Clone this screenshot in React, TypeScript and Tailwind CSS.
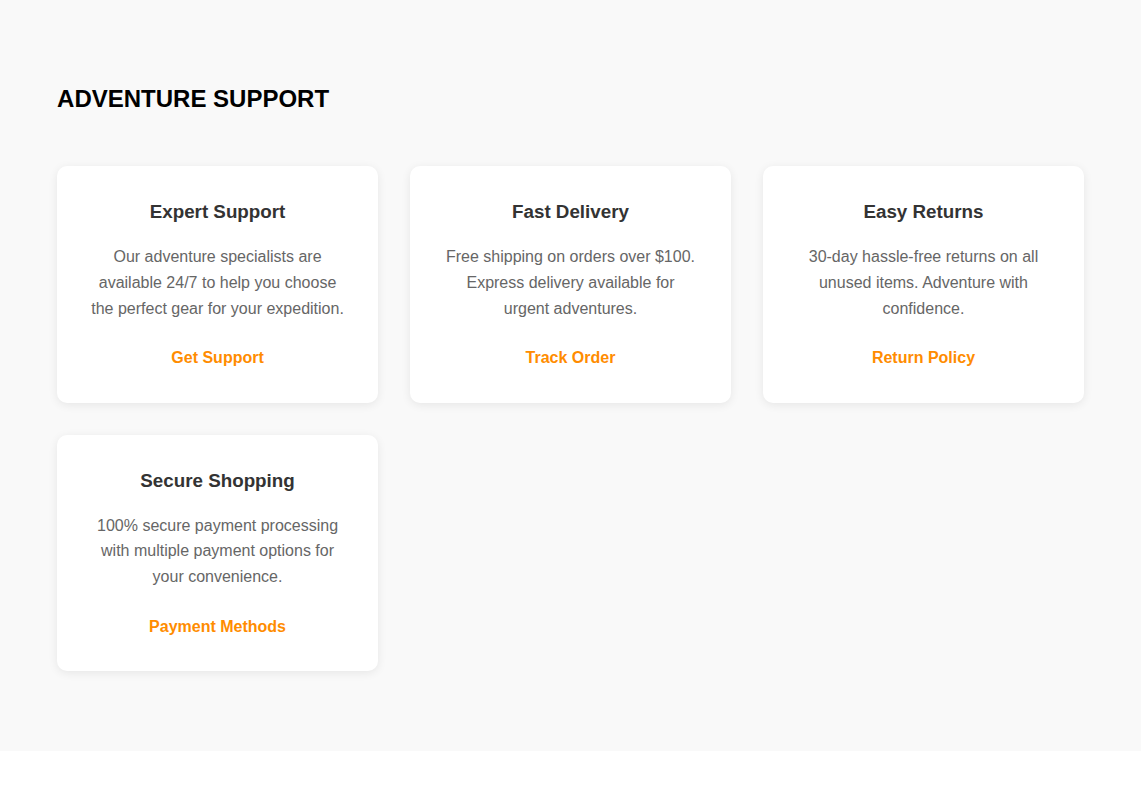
import React from 'react';

const supportItems = [
  {
    title: 'Expert Support',
    text: 'Our adventure specialists are available 24/7 to help you choose the perfect gear for your expedition.',
    link: 'Get Support',
  },
  {
    title: 'Fast Delivery',
    text: 'Free shipping on orders over $100. Express delivery available for urgent adventures.',
    link: 'Track Order',
  },
  {
    title: 'Easy Returns',
    text: '30-day hassle-free returns on all unused items. Adventure with confidence.',
    link: 'Return Policy',
  },
  {
    title: 'Secure Shopping',
    text: '100% secure payment processing with multiple payment options for your convenience.',
    link: 'Payment Methods',
  },
];

const SupportCard = ({ title, text, link }: { title: string; text: string; link: string }) => (
  <div className="bg-white rounded-[10px] p-8 text-center shadow-[0_2px_10px_rgba(0,0,0,0.08)]">
    <h3 className="text-[18.8px] font-bold leading-[27px] text-[#333] mb-[19px]">{title}</h3>
    <p className="text-base leading-[1.6] text-[#666] mb-6">{text}</p>
    <a href="#" className="block text-base leading-[1.6] font-bold text-[#ff8c00]">
      {link}
    </a>
  </div>
);

export default function App() {
  return (
    <div className="min-h-screen bg-white font-['Liberation_Sans',Arial,sans-serif]">
      <section className="bg-[#f9f9f9] px-[5%] pt-20 pb-20">
        <h2 className="text-2xl font-bold leading-[1.6] text-black mb-12">ADVENTURE SUPPORT</h2>
        <div className="grid grid-cols-3 gap-8">
          {supportItems.map((item) => (
            <SupportCard key={item.title} {...item} />
          ))}
        </div>
      </section>
    </div>
  );
}
